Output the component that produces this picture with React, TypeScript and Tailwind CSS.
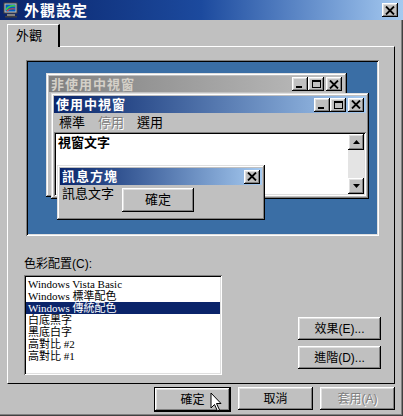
import React from 'react';

const raised = 'shadow-[inset_-1px_-1px_#000,inset_1px_1px_#fff,inset_-2px_-2px_#808080,inset_2px_2px_#dfdfdf]';
const sunken = 'shadow-[inset_1px_1px_#808080,inset_-1px_-1px_#fff,inset_2px_2px_#000,inset_-2px_-2px_#dfdfdf]';
const frame = 'shadow-[inset_-1px_-1px_#000,inset_1px_1px_#dfdfdf,inset_-2px_-2px_#808080,inset_2px_2px_#fff]';

function CapButton({ kind }: { kind: 'min' | 'max' | 'close' }) {
  return (
    <div className={`w-[16px] h-[14px] bg-[#c0c0c0] flex items-center justify-center ${raised}`}>
      {kind === 'min' && <div className="w-[6px] h-[2px] bg-black mt-[6px] -ml-[2px]" />}
      {kind === 'max' && <div className="w-[9px] h-[8px] border border-black border-t-2" />}
      {kind === 'close' && (
        <svg width="10" height="9" viewBox="0 0 10 9">
          <path d="M1 0.5 L9 8.5 M9 0.5 L1 8.5" stroke="#000" strokeWidth="1.8" />
        </svg>
      )}
    </div>
  );
}

function MonitorIcon() {
  return (
    <svg width="16" height="16" viewBox="0 0 16 16">
      <rect x="1" y="1" width="13" height="10" fill="#c0c0c0" stroke="#404040" />
      <rect x="2.5" y="2.5" width="10" height="7" fill="#0060c0" />
      <path d="M3 8 Q6 3 12 4" stroke="#40d040" strokeWidth="1.5" fill="none" />
      <path d="M4 9 Q7 6 12 7" stroke="#e04040" strokeWidth="1.2" fill="none" />
      <rect x="4" y="12" width="8" height="2" fill="#808080" />
      <rect x="2" y="14" width="12" height="1.5" fill="#404040" />
    </svg>
  );
}

function PushButton({ label, className = '', disabled = false }: { label: string; className?: string; disabled?: boolean }) {
  return (
    <div className={`h-[23px] w-[75px] bg-[#c0c0c0] flex items-center justify-center text-[12px] ${raised} ${className}`}>
      <span className={disabled ? 'text-[#808080] [text-shadow:1px_1px_#fff]' : 'text-black'}>{label}</span>
    </div>
  );
}

const schemes = ['Windows Vista Basic', 'Windows 標準配色', 'Windows 傳統配色', '白底黑字', '黑底白字', '高對比 #2', '高對比 #1'];

export default function App() {
  return (
    <div className="relative w-[403px] h-[416px] bg-[#c0c0c0] overflow-hidden font-['Liberation_Sans','Noto_Sans_CJK_TC',sans-serif] text-black shadow-[inset_-1px_-1px_#404040,inset_-2px_-2px_#808080]">
      {/* title bar */}
      <div className="h-[20px] flex items-center pl-[3px] pr-[5px] bg-gradient-to-r from-[#0a246a] via-[#1c4a9e] to-[#a6caf0]">
        <MonitorIcon />
        <span className="ml-[5px] text-white font-bold text-[15px] leading-none tracking-[1px]">外觀設定</span>
        <div className="ml-auto">
          <CapButton kind="close" />
        </div>
      </div>

      {/* tabs */}
      <div className="pl-[7px] pt-[4px] flex">
        <div className="relative z-10 w-[53px] h-[23px] bg-[#c0c0c0] border-t border-l border-white border-r-2 border-r-black flex items-center pl-[8px] text-[13px] mb-[-1px]">
          外觀
        </div>
      </div>

      {/* panel */}
      <div className="ml-[7px] w-[388px] h-[338px] border-t border-l border-white border-r border-b border-r-black border-b-black relative">
        {/* preview */}
        <div className={`ml-[18px] mt-[13px] w-[353px] h-[176px] p-[2px] ${sunken}`}>
          <div className="relative w-full h-full bg-[#3a6ea5]">
            {/* inactive window */}
            <div className={`absolute left-[18px] top-[11px] w-[301px] h-[124px] bg-[#c0c0c0] p-[3px] ${frame}`}>
              <div className="h-[16px] flex items-center pl-[2px] pr-[2px] bg-gradient-to-r from-[#808080] to-[#c0c0c0]">
                <span className="text-[#d4d0c8] font-bold text-[13px] leading-none tracking-[1px]">非使用中視窗</span>
                <div className="ml-auto flex">
                  <CapButton kind="min" />
                  <CapButton kind="max" />
                  <div className="ml-[2px]"><CapButton kind="close" /></div>
                </div>
              </div>
            </div>

            {/* active window */}
            <div className={`absolute left-[23px] top-[31px] w-[318px] h-[106px] bg-[#c0c0c0] p-[3px] flex flex-col ${frame}`}>
              <div className="h-[17px] flex items-center pl-[2px] pr-[2px] bg-gradient-to-r from-[#0a246a] to-[#a6caf0]">
                <span className="text-white font-bold text-[13px] leading-none tracking-[1px]">使用中視窗</span>
                <div className="ml-auto flex">
                  <CapButton kind="min" />
                  <CapButton kind="max" />
                  <div className="ml-[2px]"><CapButton kind="close" /></div>
                </div>
              </div>
              <div className="h-[19px] flex items-center gap-[13px] pl-[5px] text-[13px]">
                <span>標準</span>
                <span className="text-[#808080] [text-shadow:1px_1px_#fff]">停用</span>
                <span>選用</span>
              </div>
              <div className={`flex-1 flex p-[2px] ${sunken}`}>
                <div className="flex-1 bg-white pl-[2px] pt-[1px] text-[13px] font-bold leading-[16px]">視窗文字</div>
                <div className="w-[16px] bg-[#e4e4e4] flex flex-col justify-between">
                  <div className={`h-[16px] bg-[#c0c0c0] flex items-center justify-center ${raised}`}>
                    <svg width="7" height="4" viewBox="0 0 7 4"><path d="M3.5 0 L7 4 L0 4 Z" fill="#000" /></svg>
                  </div>
                  <div className={`h-[16px] bg-[#c0c0c0] flex items-center justify-center ${raised}`}>
                    <svg width="7" height="4" viewBox="0 0 7 4"><path d="M0 0 L7 0 L3.5 4 Z" fill="#000" /></svg>
                  </div>
                </div>
              </div>
            </div>

            {/* message box */}
            <div className={`absolute left-[29px] top-[103px] w-[208px] h-[55px] bg-[#c0c0c0] p-[3px] ${frame}`}>
              <div className="h-[17px] flex items-center pl-[2px] pr-[2px] bg-gradient-to-r from-[#0a246a] to-[#a6caf0]">
                <span className="text-white font-bold text-[13px] leading-none tracking-[1px]">訊息方塊</span>
                <div className="ml-auto"><CapButton kind="close" /></div>
              </div>
              <div className="flex items-start">
                <span className="pl-[2px] pt-[1px] text-[13px] leading-[16px]">訊息文字</span>
                <div className={`ml-[8px] mt-[3px] w-[72px] h-[24px] bg-[#c0c0c0] flex items-center justify-center text-[13px] ${raised}`}>確定</div>
              </div>
            </div>
          </div>
        </div>

        {/* color scheme */}
        <div className="ml-[16px] mt-[21px] text-[12px] leading-[14px]">色彩配置(C):</div>
        <div className="flex mt-[4px]">
          <div className={`ml-[16px] w-[198px] h-[100px] p-[2px] ${sunken}`}>
            <div className="w-full h-full bg-white pt-[1px] font-['Liberation_Serif','Noto_Sans_CJK_TC',serif] text-[11px]">
              {schemes.map((s) => (
                <div
                  key={s}
                  className={
                    s === 'Windows 傳統配色'
                      ? 'bg-[#0a246a] text-white pl-[2px] h-[12px] leading-[12px] overflow-hidden'
                      : 'pl-[2px] h-[12px] leading-[12px] overflow-hidden'
                  }
                >
                  {s}
                </div>
              ))}
            </div>
          </div>
          <div className="ml-[76px] mt-[42px] flex flex-col gap-[6px]">
            <PushButton label="效果(E)..." className="w-[83px] h-[21px]" />
            <PushButton label="進階(D)..." className="w-[83px] h-[21px]" />
          </div>
        </div>
      </div>

      {/* bottom buttons */}
      <div className="flex justify-end gap-[7px] pr-[8px] mt-[3px]">
        <div className="relative border border-black">
          <PushButton label="確定" className="w-[74px] h-[22px]" />
          <svg className="absolute left-[55px] top-[4px]" width="13" height="21" viewBox="0 0 13 21">
            <path d="M1 1 L1 16 L4.5 12.5 L7.5 19 L9.5 18 L6.5 11.5 L11 11.5 Z" fill="#fff" stroke="#000" strokeWidth="1" />
          </svg>
        </div>
        <PushButton label="取消" />
        <PushButton label="套用(A)" disabled />
      </div>
    </div>
  );
}
